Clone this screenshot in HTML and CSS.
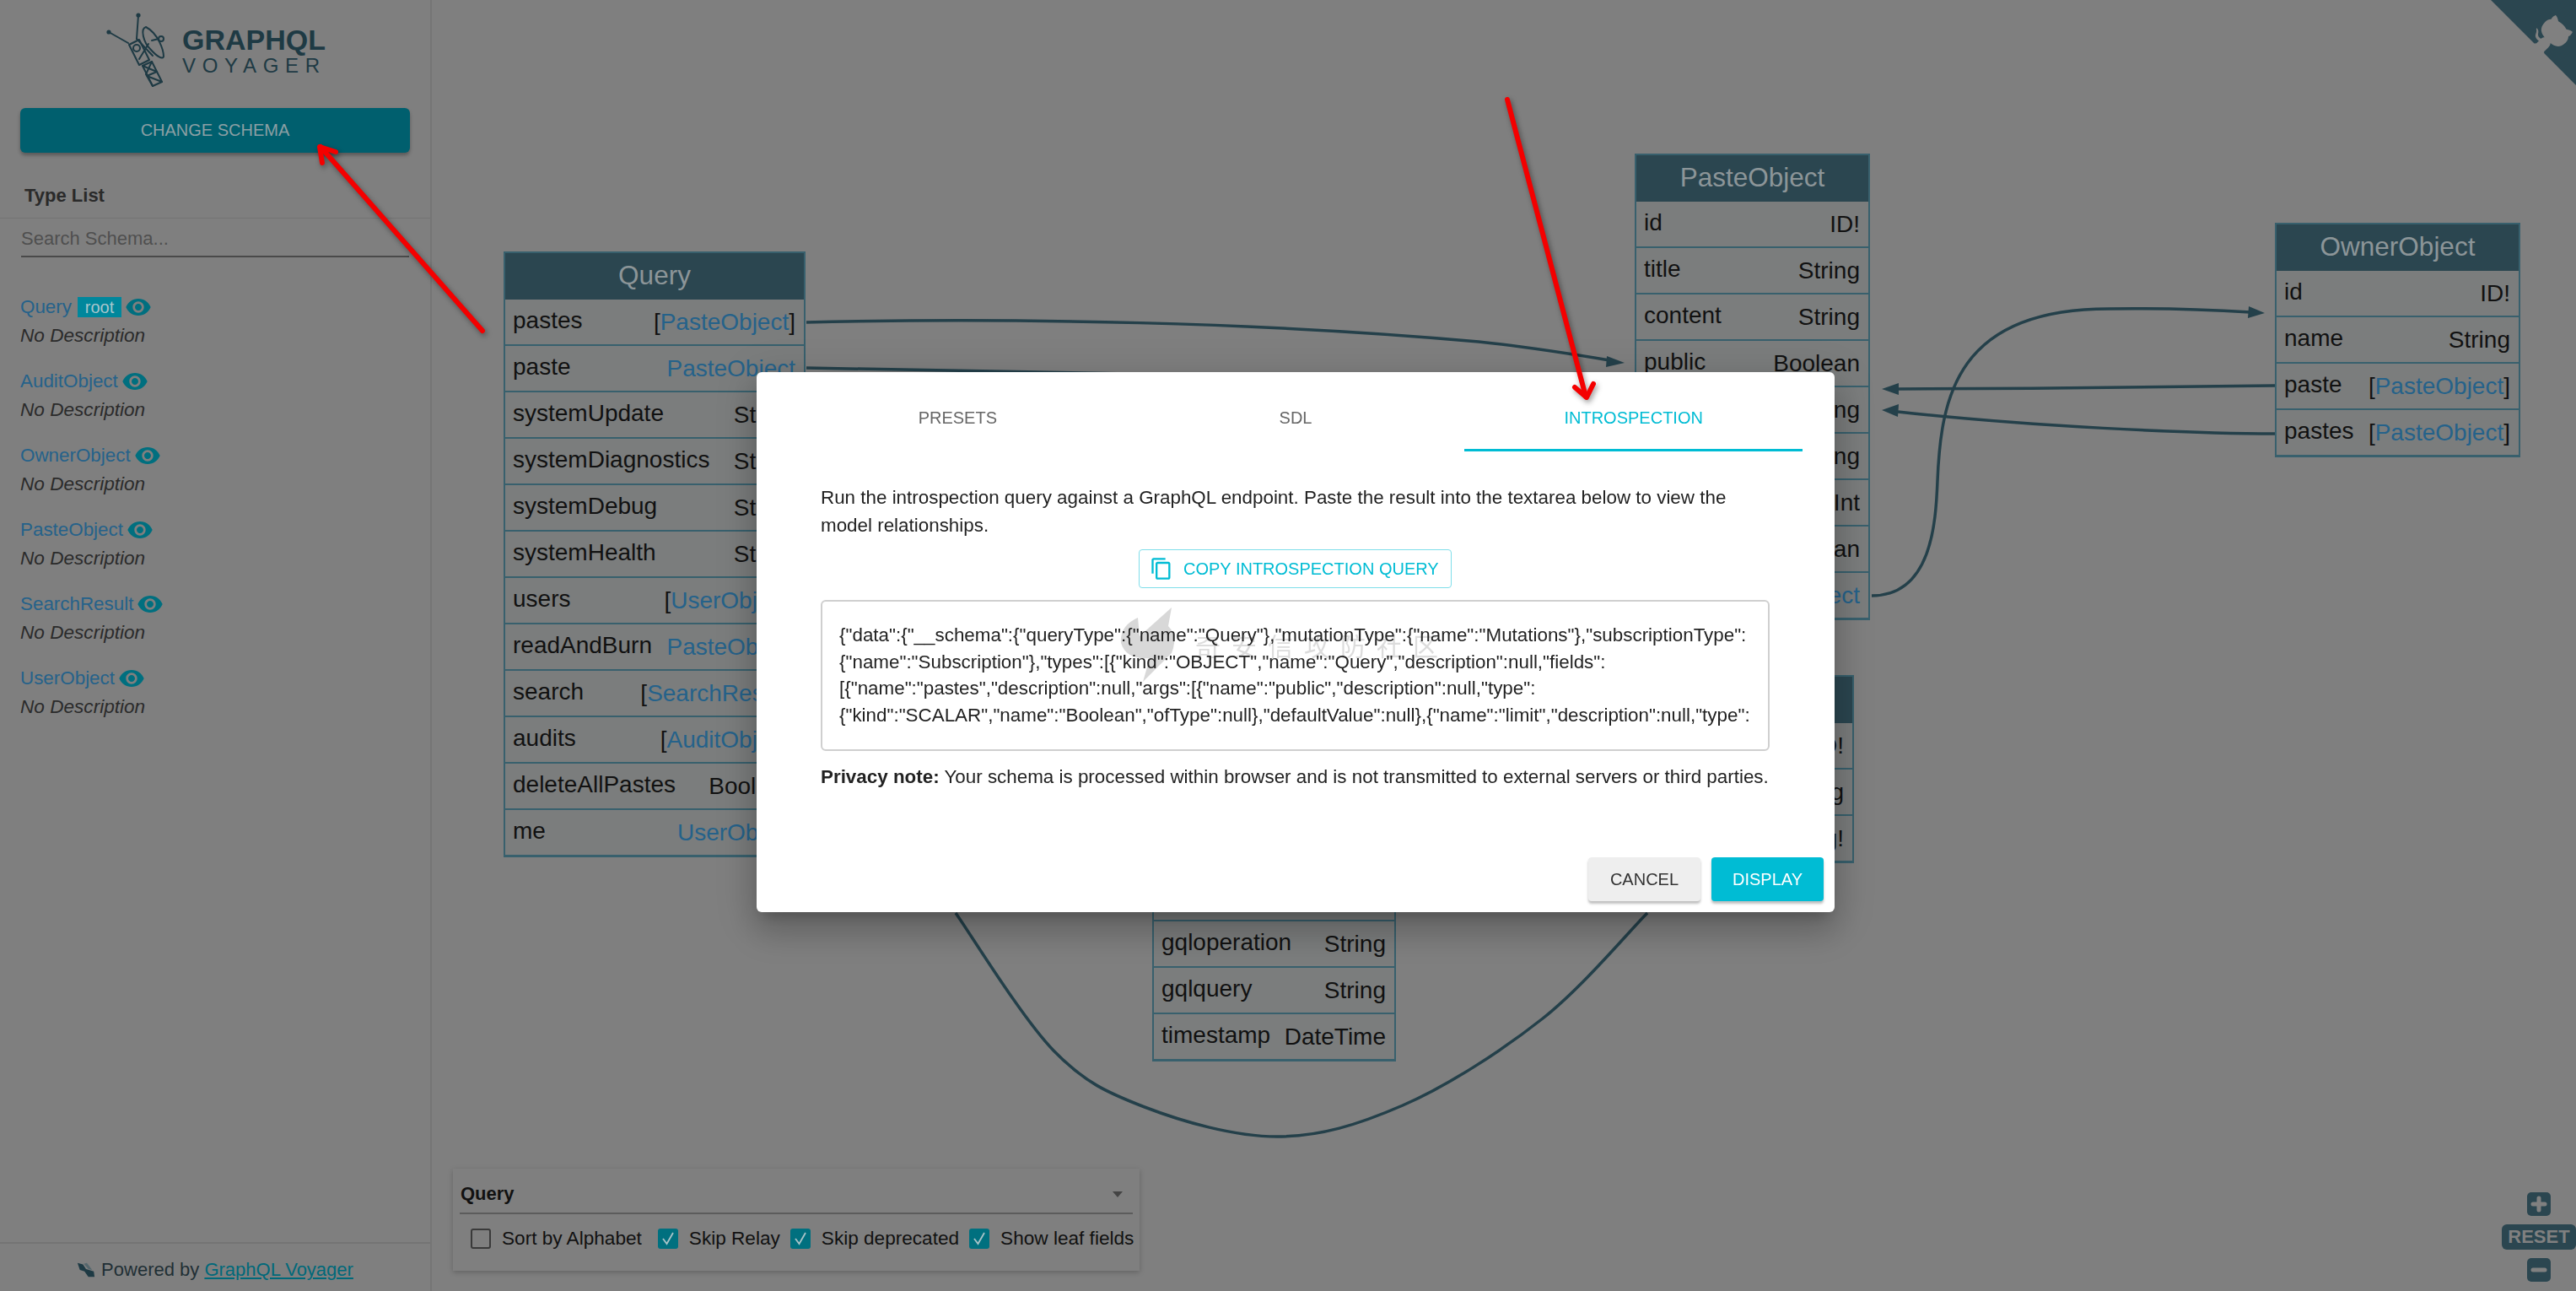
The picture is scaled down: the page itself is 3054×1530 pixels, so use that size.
FILE: index.html
```html
<!DOCTYPE html>
<html>
<head>
    <title>GraphQL Voyager</title>
    <link rel="stylesheet" href="styles.css">
</head>
<body>

<div class="app">
    <aside class="sidebar">
        <div class="logo">
            <svg class="logo-mark" viewBox="120 10 80 100">
                <g fill="none" stroke="#1e3a44" stroke-width="2" stroke-linejoin="round" stroke-linecap="round">
                    <path d="M164 18L162 46M129 38L152 51"/>
                    <path d="M153 53L165 47L177 71L165 77Z"/>
                    <path d="M162 46L181 66M176 52L165 70"/>
                    <circle cx="162" cy="57" r="4"/>
                    <path d="M173 32C166 34 170 50 178 58C186 67 193 71 194 67C194 60 188 40 173 32Z"/>
                    <path d="M180 48L188 46"/>
                    <circle cx="191" cy="46" r="3"/>
                    <path d="M169 78L180 73L192 97L181 102Z"/>
                    <path d="M169 78L186 85L174 90L192 97M180 73L173 88L181 102"/>
                </g>
                <g fill="#1e3a44">
                    <circle cx="164" cy="18" r="2.6"/>
                    <circle cx="129" cy="38" r="2.6"/>
                </g>
            </svg>
            <div class="logo-text">
                <div class="logo-title">GRAPHQL</div>
                <div class="logo-sub">VOYAGER</div>
            </div>
        </div>

        <button class="change-schema">CHANGE SCHEMA</button>

        <h3 class="type-list-title">Type List</h3>
        <div class="search-row">
            <div class="search-input">Search Schema...</div>
        </div>

        <ul class="type-list">
            <li>
                <div class="type-line"><a>Query</a><span class="chip">root</span><svg class="eye" viewBox="0 0 24 24"><path d="M12 4.5C7 4.5 2.73 7.61 1 12c1.73 4.39 6 7.5 11 7.5s9.27-3.11 11-7.5c-1.73-4.39-6-7.5-11-7.5zM12 17c-2.76 0-5-2.24-5-5s2.24-5 5-5 5 2.24 5 5-2.24 5-5 5zm0-8c-1.66 0-3 1.34-3 3s1.34 3 3 3 3-1.34 3-3-1.34-3-3-3z"/></svg></div>
                <div class="type-desc">No Description</div>
            </li>
            <li>
                <div class="type-line"><a>AuditObject</a><svg class="eye" viewBox="0 0 24 24"><path d="M12 4.5C7 4.5 2.73 7.61 1 12c1.73 4.39 6 7.5 11 7.5s9.27-3.11 11-7.5c-1.73-4.39-6-7.5-11-7.5zM12 17c-2.76 0-5-2.24-5-5s2.24-5 5-5 5 2.24 5 5-2.24 5-5 5zm0-8c-1.66 0-3 1.34-3 3s1.34 3 3 3 3-1.34 3-3-1.34-3-3-3z"/></svg></div>
                <div class="type-desc">No Description</div>
            </li>
            <li>
                <div class="type-line"><a>OwnerObject</a><svg class="eye" viewBox="0 0 24 24"><path d="M12 4.5C7 4.5 2.73 7.61 1 12c1.73 4.39 6 7.5 11 7.5s9.27-3.11 11-7.5c-1.73-4.39-6-7.5-11-7.5zM12 17c-2.76 0-5-2.24-5-5s2.24-5 5-5 5 2.24 5 5-2.24 5-5 5zm0-8c-1.66 0-3 1.34-3 3s1.34 3 3 3 3-1.34 3-3-1.34-3-3-3z"/></svg></div>
                <div class="type-desc">No Description</div>
            </li>
            <li>
                <div class="type-line"><a>PasteObject</a><svg class="eye" viewBox="0 0 24 24"><path d="M12 4.5C7 4.5 2.73 7.61 1 12c1.73 4.39 6 7.5 11 7.5s9.27-3.11 11-7.5c-1.73-4.39-6-7.5-11-7.5zM12 17c-2.76 0-5-2.24-5-5s2.24-5 5-5 5 2.24 5 5-2.24 5-5 5zm0-8c-1.66 0-3 1.34-3 3s1.34 3 3 3 3-1.34 3-3-1.34-3-3-3z"/></svg></div>
                <div class="type-desc">No Description</div>
            </li>
            <li>
                <div class="type-line"><a>SearchResult</a><svg class="eye" viewBox="0 0 24 24"><path d="M12 4.5C7 4.5 2.73 7.61 1 12c1.73 4.39 6 7.5 11 7.5s9.27-3.11 11-7.5c-1.73-4.39-6-7.5-11-7.5zM12 17c-2.76 0-5-2.24-5-5s2.24-5 5-5 5 2.24 5 5-2.24 5-5 5zm0-8c-1.66 0-3 1.34-3 3s1.34 3 3 3 3-1.34 3-3-1.34-3-3-3z"/></svg></div>
                <div class="type-desc">No Description</div>
            </li>
            <li>
                <div class="type-line"><a>UserObject</a><svg class="eye" viewBox="0 0 24 24"><path d="M12 4.5C7 4.5 2.73 7.61 1 12c1.73 4.39 6 7.5 11 7.5s9.27-3.11 11-7.5c-1.73-4.39-6-7.5-11-7.5zM12 17c-2.76 0-5-2.24-5-5s2.24-5 5-5 5 2.24 5 5-2.24 5-5 5zm0-8c-1.66 0-3 1.34-3 3s1.34 3 3 3 3-1.34 3-3-1.34-3-3-3z"/></svg></div>
                <div class="type-desc">No Description</div>
            </li>
        </ul>

        <div class="powered">
            <svg class="powered-mark" viewBox="0 0 24 20"><path d="M1 1L8 3L12 9L22 12L23 19L15 19L10 12L4 10Z" fill="#1e3a44"/><path d="M9 2L13 1L20 10L15 9Z" fill="#55676d"/></svg>
            <span>Powered by <a>GraphQL Voyager</a></span>
        </div>
    </aside>

    <main class="graph">
        <svg class="edges" viewBox="512 0 2542 1530">
            <g fill="none" stroke="#24404a" stroke-width="3.5">
                <path d="M956 382C1200 376 1500 382 1753 405C1810 411 1860 419 1908 427"/>
                <path d="M956 436C1100 438 1300 442 1500 446"/>
                <path d="M2697 457C2600 458 2400 461 2250 461"/>
                <path d="M2697 514C2600 514 2400 505 2250 488"/>
                <path d="M2219 706C2290 706 2295 620 2297 570C2301 470 2320 366 2500 366C2570 365 2620 367 2668 370"/>
                <path d="M1133 1082C1152 1109 1212 1207 1249 1245C1286 1283 1313 1295 1357 1312C1401 1329 1463 1347 1514 1347C1565 1347 1610 1333 1663 1310C1716 1287 1781 1245 1829 1207C1877 1169 1932 1103 1953 1082"/>
            </g>
            <g fill="#24404a">
                <path d="M1926 430L1904 435L1905 422Z"/>
                <path d="M2231 461L2251 454L2251 468Z"/>
                <path d="M2231 486L2251 479L2250 494Z"/>
                <path d="M2685 371L2665 377L2666 363Z"/>
            </g>
        </svg>

        <section class="node node-query">
            <header>Query</header>
            <div class="row"><span>pastes</span><span class="type">[<a>PasteObject</a>]</span></div>
            <div class="row"><span>paste</span><span class="type"><a>PasteObject</a></span></div>
            <div class="row"><span>systemUpdate</span><span class="type">String</span></div>
            <div class="row"><span>systemDiagnostics</span><span class="type">String</span></div>
            <div class="row"><span>systemDebug</span><span class="type">String</span></div>
            <div class="row"><span>systemHealth</span><span class="type">String</span></div>
            <div class="row"><span>users</span><span class="type">[<a>UserObject</a>]</span></div>
            <div class="row"><span>readAndBurn</span><span class="type"><a>PasteObject</a></span></div>
            <div class="row"><span>search</span><span class="type">[<a>SearchResult</a>]</span></div>
            <div class="row"><span>audits</span><span class="type">[<a>AuditObject</a>]</span></div>
            <div class="row"><span>deleteAllPastes</span><span class="type">Boolean</span></div>
            <div class="row"><span>me</span><span class="type"><a>UserObject</a></span></div>
        </section>

        <section class="node node-paste">
            <header>PasteObject</header>
            <div class="row"><span>id</span><span class="type">ID!</span></div>
            <div class="row"><span>title</span><span class="type">String</span></div>
            <div class="row"><span>content</span><span class="type">String</span></div>
            <div class="row"><span>public</span><span class="type">Boolean</span></div>
            <div class="row"><span>userAgent</span><span class="type">String</span></div>
            <div class="row"><span>ipAddr</span><span class="type">String</span></div>
            <div class="row"><span>ownerId</span><span class="type">Int</span></div>
            <div class="row"><span>burn</span><span class="type">Boolean</span></div>
            <div class="row"><span>owner</span><span class="type"><a>OwnerObject</a></span></div>
        </section>

        <section class="node node-owner">
            <header>OwnerObject</header>
            <div class="row"><span>id</span><span class="type">ID!</span></div>
            <div class="row"><span>name</span><span class="type">String</span></div>
            <div class="row"><span>paste</span><span class="type">[<a>PasteObject</a>]</span></div>
            <div class="row"><span>pastes</span><span class="type">[<a>PasteObject</a>]</span></div>
        </section>

        <section class="node node-audit">
            <header>AuditObject</header>
            <div class="row"><span>id</span><span class="type">ID!</span></div>
            <div class="row"><span>gqloperation</span><span class="type">String</span></div>
            <div class="row"><span>gqlquery</span><span class="type">String</span></div>
            <div class="row"><span>timestamp</span><span class="type">DateTime</span></div>
        </section>

        <section class="node node-user">
            <header>UserObject</header>
            <div class="row"><span>id</span><span class="type">ID!</span></div>
            <div class="row"><span>username</span><span class="type">String</span></div>
            <div class="row"><span>password</span><span class="type">String!</span></div>
        </section>

        <div class="settings">
            <div class="settings-select"><strong>Query</strong><span class="select-arrow"></span></div>
            <div class="settings-checks">
                <label class="check"><span class="box"></span>Sort by Alphabet</label>
                <label class="check"><span class="box on"><svg viewBox="0 0 24 24"><path d="M6 12l4.5 6L18 5" fill="none" stroke="#a9c4c9" stroke-width="1.8"/></svg></span>Skip Relay</label>
                <label class="check"><span class="box on"><svg viewBox="0 0 24 24"><path d="M6 12l4.5 6L18 5" fill="none" stroke="#a9c4c9" stroke-width="1.8"/></svg></span>Skip deprecated</label>
                <label class="check"><span class="box on"><svg viewBox="0 0 24 24"><path d="M6 12l4.5 6L18 5" fill="none" stroke="#a9c4c9" stroke-width="1.8"/></svg></span>Show leaf fields</label>
            </div>
        </div>

        <div class="zoom-controls">
            <button class="zoom-btn"><svg viewBox="0 0 28 28"><path d="M14 7v14M7 14h14" stroke="#808080" stroke-width="5" stroke-linecap="round"/></svg></button>
            <button class="zoom-reset">RESET</button>
            <button class="zoom-btn"><svg viewBox="0 0 28 28"><path d="M7 14h14" stroke="#808080" stroke-width="5" stroke-linecap="round"/></svg></button>
        </div>

        <svg class="github-corner" viewBox="0 0 250 250">
            <path d="M0,0 L115,115 L130,115 L142,142 L250,250 L250,0 Z" fill="#2b4650"/>
            <path d="M128.3,109.0 C113.8,99.7 119.0,89.6 119.0,89.6 C122.0,82.7 120.5,78.6 120.5,78.6 C119.2,72.0 123.4,76.3 123.4,76.3 C127.3,80.9 125.5,87.3 125.5,87.3 C122.9,97.6 130.6,101.9 134.4,103.2" fill="#808080"/>
            <path d="M115.0,115.0 C114.9,115.1 118.7,116.5 119.8,115.4 L133.7,101.6 C136.9,99.2 139.9,98.4 142.2,98.6 C133.8,88.0 127.5,74.4 143.8,58.0 C148.5,53.4 154.0,51.2 159.7,51.0 C160.3,49.4 163.2,43.6 171.4,40.1 C171.4,40.1 176.1,42.5 178.8,56.2 C183.1,58.6 187.2,61.8 190.9,65.4 C194.5,69.0 197.7,73.2 200.1,77.6 C213.8,80.2 216.3,84.9 216.3,84.9 C212.7,93.1 206.9,96.0 205.4,96.6 C205.1,102.4 203.0,107.8 198.3,112.5 C181.9,128.9 168.3,122.5 157.7,114.1 C157.9,116.9 156.7,120.9 152.7,124.9 L141.0,136.5 C139.8,137.7 141.6,141.9 141.8,141.8 Z" fill="#808080"/>
        </svg>
    </main>
</div>

<div class="backdrop">
    <div class="modal">
        <div class="tabs">
            <div class="tab">PRESETS</div>
            <div class="tab">SDL</div>
            <div class="tab active">INTROSPECTION</div>
        </div>
        <div class="modal-body">
            <p class="intro">Run the introspection query against a GraphQL endpoint. Paste the result into the textarea below to view the<br>model relationships.</p>
            <div class="copy-row">
                <button class="copy-btn">
                    <svg viewBox="0 0 24 24"><path d="M16 1H4c-1.1 0-2 .9-2 2v14h2V3h12V1zm3 4H8c-1.1 0-2 .9-2 2v14c0 1.1.9 2 2 2h11c1.1 0 2-.9 2-2V7c0-1.1-.9-2-2-2zm0 16H8V7h11v14z"/></svg>
                    COPY INTROSPECTION QUERY
                </button>
            </div>
            <div class="schema-box">
                <div class="watermark">
                    <svg viewBox="0 0 70 88"><path d="M62 0L58 22Q70 34 62 54L28 88L36 60Q8 62 2 42Q0 22 22 12L24 34Z" fill="#d8d8d8"/></svg>
                    <span>奇安信攻防社区</span>
                </div>
                <div class="schema-text">{"data":{"__schema":{"queryType":{"name":"Query"},"mutationType":{"name":"Mutations"},"subscriptionType":
{"name":"Subscription"},"types":[{"kind":"OBJECT","name":"Query","description":null,"fields":
[{"name":"pastes","description":null,"args":[{"name":"public","description":null,"type":
{"kind":"SCALAR","name":"Boolean","ofType":null},"defaultValue":null},{"name":"limit","description":null,"type":</div>
            </div>
            <p class="privacy"><strong>Privacy note:</strong> Your schema is processed within browser and is not transmitted to external servers or third parties.</p>
        </div>
        <div class="modal-actions">
            <button class="btn-cancel">CANCEL</button>
            <button class="btn-display">DISPLAY</button>
        </div>
    </div>
</div>

<svg class="annotations" viewBox="0 0 3054 1530">
    <g fill="none" stroke="#f40000" stroke-width="6" stroke-linecap="round" stroke-linejoin="round">
        <path d="M572 392L380 174"/>
        <path d="M398 180L379 174L382 193"/>
        <path d="M1787 118L1880 470"/>
        <path d="M1889 455L1881 471L1867 459"/>
    </g>
</svg>

</body>
</html>
```

FILE: styles.css
```css
* {
    box-sizing: border-box;
}
html, body {
    margin: 0;
    height: 100%;
    overflow: hidden;
}
body {
    font-family: "Liberation Sans", Arial, sans-serif;
    background-color: #7f7f7f;
    color: #111;
}
button {
    font-family: inherit;
    border: none;
    padding: 0;
}
.app {
    display: flex;
    height: 100vh;
}

/* sidebar */
.sidebar {
    width: 512px;
    flex: none;
    display: flex;
    flex-direction: column;
    border-right: 2px solid #757575;
}
.logo {
    display: flex;
    height: 128px;
    padding: 10px 0 0 120px;
}
.logo-mark {
    width: 80px;
    height: 100px;
    flex: none;
}
.logo-text {
    margin-left: 16px;
    color: #1e3a44;
}
.logo-title {
    font-size: 34px;
    font-weight: bold;
    line-height: 39px;
    margin-top: 18px;
}
.logo-sub {
    font-size: 24px;
    letter-spacing: 7.7px;
    line-height: 27px;
    margin-top: -3px;
}
.change-schema {
    margin: 0 24px;
    width: 462px;
    height: 53px;
    flex: none;
    border-radius: 6px;
    background-color: #005f6e;
    color: #8b9fa4;
    font-size: 20px;
    box-shadow: 0 3px 4px rgba(0, 0, 0, 0.3);
}
.type-list-title {
    margin: 34px 0 0;
    padding: 0 29px;
    font-size: 22px;
    line-height: 34px;
    color: #2a2a2a;
    border-bottom: 1px solid #737373;
    box-sizing: content-box;
    height: 43px;
}
.search-row {
    padding: 0 25px;
}
.search-input {
    height: 46px;
    padding-top: 11px;
    font-size: 22px;
    line-height: 26px;
    color: #4f4f4f;
    border-bottom: 2px solid #4a4a4a;
}
.type-list {
    list-style-type: none;
    margin: 42px 0 0;
    padding: 0 24px;
}
.type-list li {
    height: 88px;
}
.type-line {
    display: flex;
    align-items: center;
    height: 34px;
    font-size: 22.4px;
}
.type-line a {
    color: #25628a;
}
.chip {
    margin-left: 7px;
    width: 52px;
    height: 24px;
    background-color: #00879c;
    color: #a9c6cd;
    font-size: 20px;
    line-height: 24px;
    text-align: center;
}
.eye {
    width: 32px;
    height: 32px;
    margin-left: 4px;
    fill: #006f7f;
}
.type-desc {
    font-size: 22.6px;
    font-style: italic;
    line-height: 34px;
    color: #2b2b2b;
}
.powered {
    margin-top: auto;
    height: 58px;
    display: flex;
    align-items: center;
    justify-content: center;
    gap: 7px;
    padding-top: 6px;
    font-size: 22px;
    color: #1f2f35;
    border-top: 2px solid #747474;
}
.powered a {
    color: #00697a;
    text-decoration: underline;
}
.powered-mark {
    width: 22px;
    height: 20px;
}

/* graph canvas */
.graph {
    position: relative;
    flex: 1;
    overflow: hidden;
}
.edges {
    position: absolute;
    left: 0;
    top: 0;
    width: 2542px;
    height: 1530px;
}
.node {
    position: absolute;
    border: 2px solid #38606d;
    border-bottom-width: 1px;
}
.node header {
    height: 55px;
    background-color: #2b4650;
    color: #8c9598;
    font-size: 31.5px;
    line-height: 53px;
    text-align: center;
}
.row {
    height: 55px;
    display: flex;
    justify-content: space-between;
    align-items: center;
    padding: 0 10px 3px 9px;
    background-color: #7b7d7d;
    border-bottom: 2px solid #38606d;
    font-size: 28px;
    white-space: nowrap;
}
.type {
    padding-top: 3px;
}
.type a {
    color: #25628a;
}
.node-query {
    left: 85px;
    top: 298px;
    width: 358px;
}
.node-paste {
    left: 1426px;
    top: 182px;
    width: 279px;
}
.node-owner {
    left: 2185px;
    top: 264px;
    width: 291px;
}
.node-audit {
    left: 854px;
    top: 980px;
    width: 289px;
}
.node-user {
    left: 1386px;
    top: 800px;
    width: 300px;
}

/* bottom settings panel */
.settings {
    position: absolute;
    left: 25px;
    top: 1385px;
    width: 814px;
    height: 121px;
    padding: 0 8px;
    box-shadow: 0 2px 6px rgba(0, 0, 0, 0.22);
    background-color: #7f7f7f;
}
.settings-select {
    height: 54px;
    display: flex;
    align-items: center;
    justify-content: space-between;
    padding: 8px 12px 0 1px;
    font-size: 22px;
    border-bottom: 2px solid #5c5c5c;
}
.select-arrow {
    border-left: 6px solid transparent;
    border-right: 6px solid transparent;
    border-top: 7px solid #444;
}
.settings-checks {
    display: flex;
    gap: 12px;
    margin-top: 17px;
    padding-left: 13px;
    font-size: 22.6px;
    white-space: nowrap;
}
.check {
    display: flex;
    align-items: center;
    gap: 13px;
    height: 24px;
}
.check:first-child {
    margin-right: 7px;
}
.box {
    width: 24px;
    height: 24px;
    border: 2px solid #3a3a3a;
    border-radius: 3px;
}
.box.on {
    background-color: #00707f;
    border: none;
}
.box svg {
    display: block;
    width: 24px;
    height: 24px;
}

/* zoom buttons */
.zoom-controls {
    position: absolute;
    right: 0;
    top: 1413px;
    width: 88px;
    display: flex;
    flex-direction: column;
    align-items: center;
    gap: 10px;
}
.zoom-btn {
    width: 28px;
    height: 28px;
    border-radius: 5px;
    background-color: #2b4650;
}
.zoom-btn svg {
    display: block;
}
.zoom-reset {
    width: 88px;
    height: 30px;
    border-radius: 6px;
    background-color: #2b4650;
    color: #808080;
    font-size: 22px;
    font-weight: bold;
}

.github-corner {
    position: absolute;
    right: -11px;
    top: 0;
    width: 112px;
    height: 112px;
}

/* dialog */
.backdrop {
    position: fixed;
    left: 897px;
    top: 441px;
}
.modal {
    width: 1278px;
    height: 640px;
    display: flex;
    flex-direction: column;
    background-color: #fff;
    border-radius: 6px;
    box-shadow: 0 11px 15px -7px rgba(0, 0, 0, 0.2), 0 24px 38px 3px rgba(0, 0, 0, 0.14), 0 9px 46px 8px rgba(0, 0, 0, 0.12);
}
.tabs {
    display: flex;
    height: 94px;
    padding: 0 38px;
}
.tab {
    flex: 1;
    text-align: center;
    padding-top: 42px;
    font-size: 20px;
    line-height: 24px;
    color: #666;
}
.tab.active {
    color: #00bcd4;
    border-bottom: 3px solid #00bcd4;
}
.modal-body {
    padding: 38px 77px 0 76px;
}
.intro {
    margin: 0;
    font-size: 22.4px;
    line-height: 33px;
    color: #222;
    white-space: nowrap;
}
.copy-row {
    display: flex;
    justify-content: center;
    margin-top: 12px;
}
.copy-btn {
    width: 371px;
    height: 46px;
    display: flex;
    align-items: center;
    gap: 12px;
    padding-left: 12px;
    background: none;
    border: 1px solid #7fdeea;
    border-radius: 4px;
    color: #00bcd4;
    font-size: 20px;
}
.copy-btn svg {
    width: 28px;
    height: 28px;
    fill: #00bcd4;
}
.schema-box {
    position: relative;
    margin-top: 14px;
    height: 179px;
    border: 2px solid #cfcfcf;
    border-radius: 6px;
}
.schema-text {
    position: relative;
    padding: 24px 0 0 20px;
    font-size: 22.4px;
    line-height: 31.5px;
    color: #222;
    white-space: pre;
}
.watermark {
    position: absolute;
    left: 352px;
    top: 7px;
    display: flex;
    align-items: center;
    gap: 20px;
    color: #dcdcdc;
    font-family: "Noto Sans CJK SC", sans-serif;
    font-size: 30px;
    letter-spacing: 13px;
}
.watermark svg {
    width: 70px;
    height: 88px;
}
.privacy {
    margin: 16px 0 0;
    font-size: 22.4px;
    line-height: 30px;
    color: #222;
    white-space: nowrap;
}
.modal-actions {
    margin-top: auto;
    display: flex;
    justify-content: flex-end;
    gap: 13px;
    padding: 0 13px 13px 0;
}
.modal-actions button {
    width: 133px;
    height: 52px;
    border-radius: 4px;
    font-size: 20px;
    box-shadow: 0 3px 3px rgba(0, 0, 0, 0.25);
}
.btn-cancel {
    background-color: #eee;
    color: #333;
}
.btn-display {
    background-color: #00bcd4;
    color: #fff;
}

/* red review arrows sit on top of everything */
.annotations {
    position: fixed;
    left: 0;
    top: 0;
    width: 3054px;
    height: 1530px;
    pointer-events: none;
    filter: drop-shadow(2px 3px 3px rgba(0, 0, 0, 0.4));
}
```
